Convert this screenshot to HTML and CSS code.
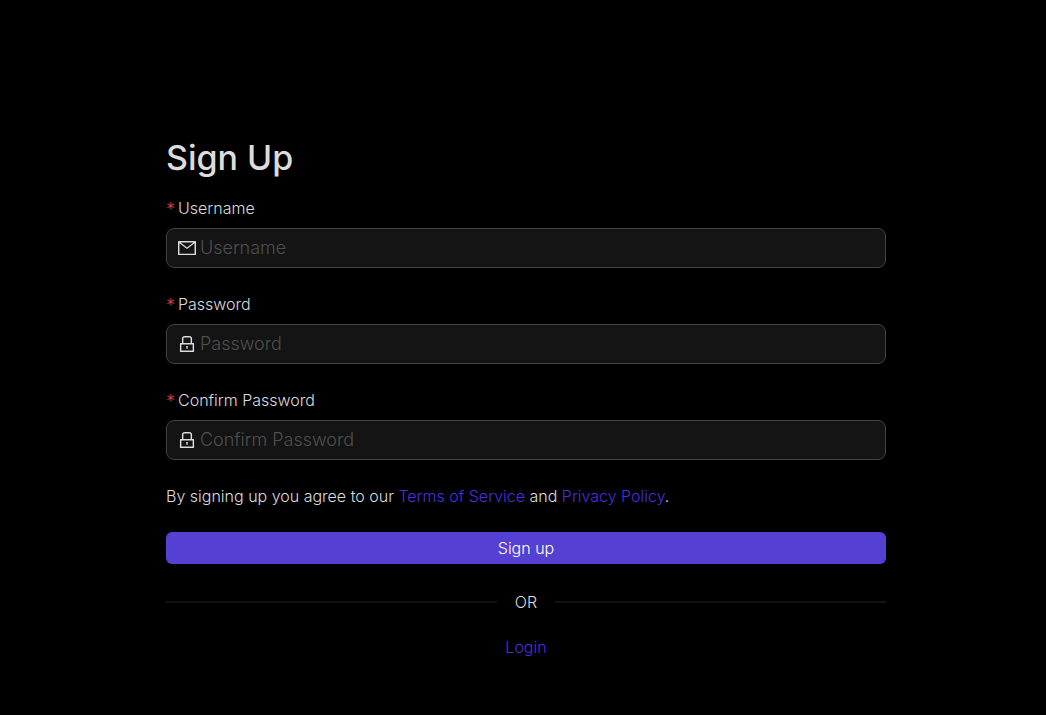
FILE: index.html
```html
<!DOCTYPE html>
<html lang="en">
<head>
<meta charset="utf-8">
<meta name="viewport" content="width=device-width, initial-scale=1">
<title>Sign Up</title>
<link rel="stylesheet" href="styles.css">
</head>
<body>
<main class="page">
  <form class="form">
    <h1 class="title">Sign Up</h1>
    <div class="field">
      <label class="label" for="username">Username</label>
      <div class="control">
        <svg class="icon" viewBox="64 64 896 896" aria-hidden="true"><path d="M928 160H96c-17.700 0-32 14.300-32 32v640c0 17.700 14.300 32 32 32h832c17.700 0 32-14.300 32-32V192c0-17.700-14.300-32-32-32zm-40 110.800V792H136V270.800l-27.600-21.500 39.300-50.500 42.800 33.300h643.100l42.800-33.300 39.300 50.500-27.700 21.500zM833.600 232L512 482 190.400 232l-42.800-33.300-39.300 50.500 27.600 21.500 341.600 265.600a55.990 55.990 0 0068.700 0L888 270.800l27.600-21.500-39.300-50.500-42.700 33.200z"/></svg>
        <input class="input" id="username" type="text" placeholder="Username" required>
      </div>
    </div>
    <div class="field">
      <label class="label" for="password">Password</label>
      <div class="control">
        <svg class="icon" viewBox="64 64 896 896" aria-hidden="true"><path d="M832 464h-68V240c0-70.700-57.300-128-128-128H388c-70.700 0-128 57.300-128 128v224h-68c-17.700 0-32 14.300-32 32v384c0 17.700 14.300 32 32 32h640c17.700 0 32-14.300 32-32V496c0-17.700-14.300-32-32-32zM332 240c0-30.900 25.100-56 56-56h248c30.900 0 56 25.100 56 56v224H332V240zm460 600H232V536h560v304zM484 701v53c0 4.400 3.600 8 8 8h40c4.400 0 8-3.600 8-8v-53a48.010 48.010 0 10-56 0z"/></svg>
        <input class="input" id="password" type="password" placeholder="Password" required>
      </div>
    </div>
    <div class="field">
      <label class="label" for="confirm">Confirm Password</label>
      <div class="control">
        <svg class="icon" viewBox="64 64 896 896" aria-hidden="true"><path d="M832 464h-68V240c0-70.700-57.300-128-128-128H388c-70.700 0-128 57.300-128 128v224h-68c-17.700 0-32 14.300-32 32v384c0 17.700 14.300 32 32 32h640c17.700 0 32-14.300 32-32V496c0-17.700-14.300-32-32-32zM332 240c0-30.900 25.100-56 56-56h248c30.900 0 56 25.100 56 56v224H332V240zm460 600H232V536h560v304zM484 701v53c0 4.400 3.600 8 8 8h40c4.400 0 8-3.600 8-8v-53a48.010 48.010 0 10-56 0z"/></svg>
        <input class="input" id="confirm" type="password" placeholder="Confirm Password" required>
      </div>
    </div>
    <p class="terms">By signing up you agree to our <a class="link" href="#terms">Terms of Service</a> and <a class="link" href="#privacy">Privacy Policy</a>.</p>
    <button class="submit" type="submit">Sign up</button>
    <div class="divider">OR</div>
    <a class="link login" href="#login">Login</a>
  </form>
</main>
</body>
</html>
```
FILE: styles.css
```css
* {
  box-sizing: border-box;
}

body {
  margin: 0;
  background: #000;
  color: #dcdcdc;
  font: 300 16px/24px Inter, sans-serif;
}

.page {
  display: flex;
  justify-content: center;
  padding: 136px 160px 56px 166px;
}

.form {
  display: flex;
  flex-direction: column;
  flex: 1;
  max-width: 720px;
}

.title {
  margin: 0 0 16px;
  font-size: 34px;
  font-weight: 500;
  line-height: 44px;
}

.field {
  margin-bottom: 24px;
}

.label {
  display: flex;
  gap: 4px;
  margin-bottom: 8px;
}

.label::before {
  content: "\2217";
  width: 8px;
  color: #dc4446;
  font-family: "DejaVu Sans Mono", monospace;
  font-size: 16px;
  line-height: 20px;
}

.control {
  display: flex;
  align-items: center;
  gap: 4px;
  height: 40px;
  padding: 0 11px;
  background: #141414;
  border: 1px solid #424242;
  border-radius: 8px;
}

.icon {
  width: 18px;
  height: 18px;
  fill: currentColor;
}

.input {
  flex: 1;
  min-width: 0;
  padding: 0;
  background: none;
  border: 0;
  outline: 0;
  color: inherit;
  font: 300 18px/28px Inter, sans-serif;
}

.input::placeholder {
  color: #4f4f4f;
}

.terms {
  margin: 0 0 24px;
}

.link {
  color: #4a2fe0;
  text-decoration: none;
}

.submit {
  height: 32px;
  padding: 0;
  background: #5440d2;
  border: 0;
  border-radius: 6px;
  color: #fff;
  font: inherit;
}

.divider {
  display: flex;
  align-items: center;
  gap: 18px;
  margin: 26px 0 21px;
}

.divider::before,
.divider::after {
  content: "";
  flex: 1;
  height: 2px;
  background: #121212;
}

.login {
  align-self: center;
}
```
